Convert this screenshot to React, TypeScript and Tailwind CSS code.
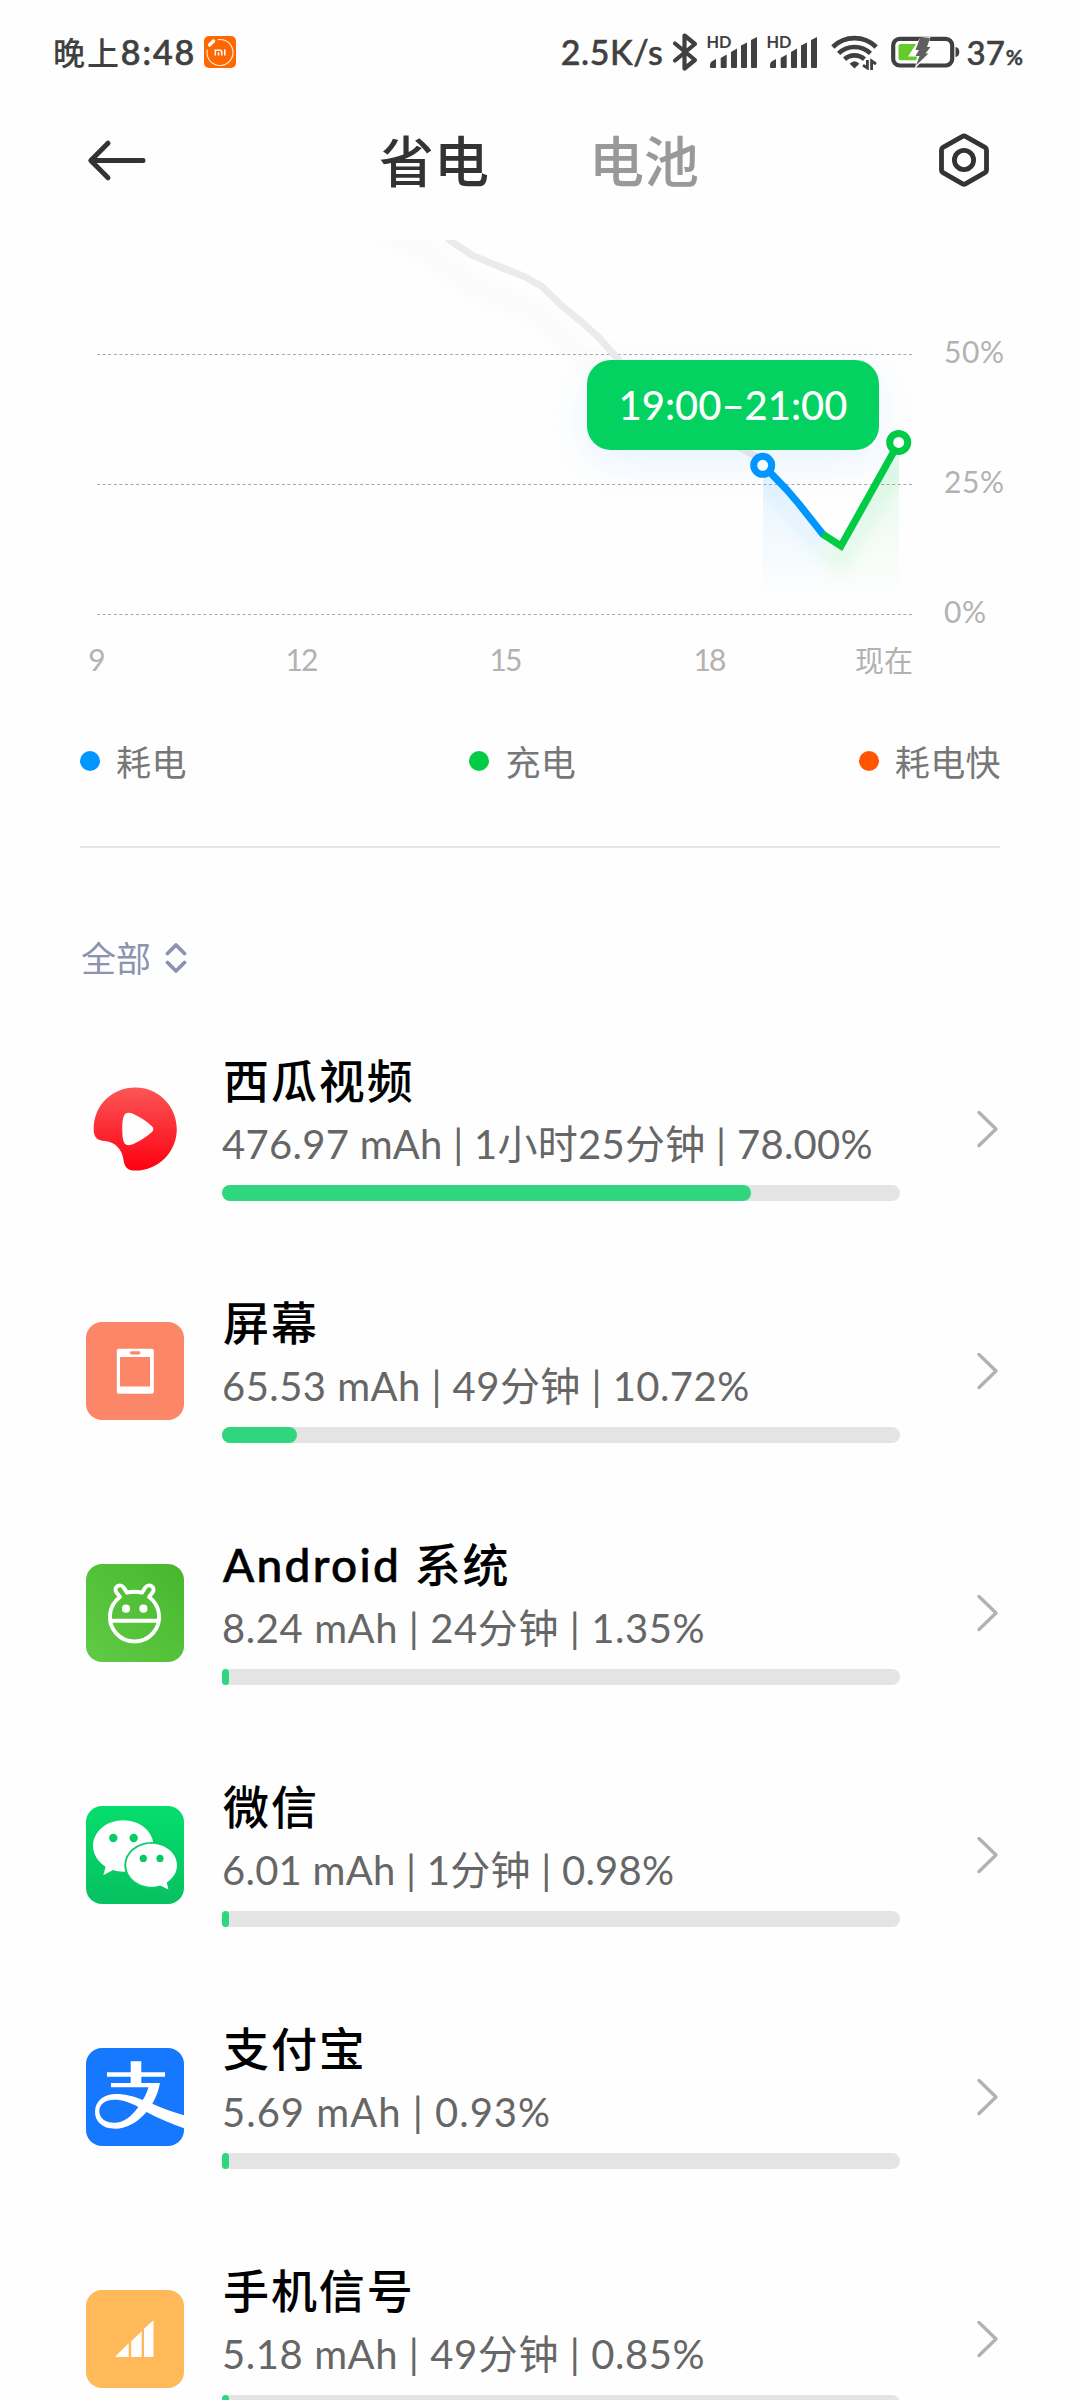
import type { ReactNode } from "react";

type Usage = {
	name: string;
	detail: string;
	detailClass: string;
	bar: number;
	icon: ReactNode;
};

function XiguaIcon() {
	return (
		<svg viewBox="0 0 98 98" className="size-[98px]">
			<defs>
				<linearGradient id="xigua" x1="0" y1="0" x2="0" y2="1">
					<stop offset="0" stopColor="#fb5757" />
					<stop offset="1" stopColor="#fd0010" />
				</linearGradient>
			</defs>
			<path
				fill="url(#xigua)"
				fillRule="evenodd"
				d="M7.7 50C7.2 25.5 26 7.4 49.3 7.4C72.5 7.4 90.8 26 90.8 49C90.8 72 72.5 90.6 49.3 90.6C42 90.6 38.6 87.5 37.6 80.5C36.6 70 29.5 62 19 61C11 60.5 7.9 57 7.7 50ZM36.3 49C36.3 57 37.2 62.5 39.5 64.2C41.5 65.8 44.5 65.3 47.5 64C55 60.5 60.5 57 65.6 52.3C68 50 68 48.2 65.6 46C60.5 41.2 55 37.5 47.5 34C44.5 32.7 41.5 32.2 39.5 33.8C37.2 35.5 36.3 41 36.3 49Z"
			/>
		</svg>
	);
}

function ScreenIcon() {
	return (
		<svg viewBox="0 0 98 98" className="size-[98px] rounded-2xl bg-[#fb8668]">
			<rect x="30.8" y="26.8" width="37" height="45" rx="2" fill="#fff" />
			<rect x="34" y="35" width="30" height="29.5" fill="#fb8668" />
			<rect x="44" y="29.3" width="10.3" height="3.2" rx="1.4" fill="#fb8668" />
		</svg>
	);
}

function AndroidIcon() {
	return (
		<svg viewBox="0 0 98 98" className="size-[98px] rounded-2xl bg-linear-to-tr from-[#60cb44] to-[#47b72e]">
			<g fill="none" stroke="#fff" strokeWidth="3.9" strokeLinejoin="round">
				<path d="M34 33L30.3 28.3C27 23 34.3 18.8 37.8 23.6L41 28.6Q48.5 26.8 56 28.6L59.2 23.6C62.7 18.8 70 23 66.7 28.3L63 33A24.6 24.6 0 1 1 34 33Z" />
				<path d="M24.5 56.8H72.5" />
			</g>
			<circle cx="40" cy="44.7" r="4.1" fill="#fff" />
			<circle cx="57.4" cy="44.7" r="4.1" fill="#fff" />
		</svg>
	);
}

function WechatIcon() {
	return (
		<svg viewBox="0 0 98 98" className="size-[98px] rounded-2xl bg-linear-to-b from-[#04de6c] to-[#07c160]">
			<path fill="#fff" d="M37.3 14.3C54 14.3 67.6 25.7 67.6 40C67.6 54.3 54 65.7 37.3 65.7C34 65.7 30.3 65.1 27 64.1L17.3 69.2L19.6 60.7C12 55.8 7 48.2 7 40C7 25.7 20.6 14.3 37.3 14.3Z" />
			<g fill="#07cd65">
				<circle cx="27.3" cy="32" r="4.2" />
				<circle cx="47.7" cy="32" r="4.2" />
				<ellipse cx="65.6" cy="59.3" rx="27.3" ry="23.4" />
			</g>
			<path fill="#fff" d="M65.6 37.8C51.6 37.8 40.3 47.4 40.3 59.3C40.3 71.2 51.6 80.8 65.6 80.8C68.6 80.8 71.5 80.4 74.2 79.5L82.4 83.4L80.8 76.5C87 72.5 91 66.3 91 59.3C91 47.4 79.6 37.8 65.6 37.8Z" />
			<g fill="#07c863">
				<circle cx="57.3" cy="52.4" r="3.6" />
				<circle cx="74" cy="52.4" r="3.6" />
			</g>
		</svg>
	);
}

function AlipayIcon() {
	return (
		<svg viewBox="0 0 98 98" className="size-[98px] rounded-2xl bg-[#1677ff]">
			<path fill="#fff" d="M44.7 13.3H55.3V24.3H79V28.7H55.3V35H74C72.8 42 70 49.5 66.3 55.7C76 60 87 64 98 67.3V80.3C84 75.5 72 70 60.5 64C52 74 41 80.7 29 80.7C16 80.7 9 73.5 9 63.8C9 53 18 46 30 46C40 46 48 48.5 56.7 52C59.3 48.3 61.3 43.5 62.5 39.3H25V35H44.7V28.7H21V24.3H44.7Z" />
			<path fill="#1677ff" d="M52.3 58.9C44 54.5 36.5 51.8 28.5 51.8C19.5 51.8 13.3 56.3 13.3 63C13.3 70.3 19.5 74.8 28.3 74.8C37.5 74.8 45.5 68.3 52.3 58.9Z" />
		</svg>
	);
}

function SignalIcon() {
	return (
		<svg viewBox="0 0 98 98" className="size-[98px] rounded-2xl bg-[#ffb958]">
			<path fill="#fff" d="M30 65.8L42.7 53.3V67H30ZM45.2 51.3L55.7 41.2V67H45.2ZM58 38.8L67.5 30.2V67H58Z" />
		</svg>
	);
}

const usages: Usage[] = [
	{ name: "西瓜视频", detail: "476.97 mAh | 1小时25分钟 | 78.00%", detailClass: "tracking-[0.28px]", bar: 529, icon: <XiguaIcon /> },
	{ name: "屏幕", detail: "65.53 mAh | 49分钟 | 10.72%", detailClass: "tracking-[0.45px]", bar: 75, icon: <ScreenIcon /> },
	{ name: "Android 系统", detail: "8.24 mAh | 24分钟 | 1.35%", detailClass: "tracking-[0.57px]", bar: 7, icon: <AndroidIcon /> },
	{ name: "微信", detail: "6.01 mAh | 1分钟 | 0.98%", detailClass: "tracking-[0.25px]", bar: 7, icon: <WechatIcon /> },
	{ name: "支付宝", detail: "5.69 mAh | 0.93%", detailClass: "tracking-[1px]", bar: 7, icon: <AlipayIcon /> },
	{ name: "手机信号", detail: "5.18 mAh | 49分钟 | 0.85%", detailClass: "tracking-[0.57px]", bar: 7, icon: <SignalIcon /> },
];

function CellSignal() {
	return (
		<svg viewBox="0 0 52 36" className="h-9 w-[52px] overflow-visible" fill="#404040">
			<text x="-0.5" y="14" fontSize="17" fontWeight="700" textLength="25" lengthAdjust="spacingAndGlyphs">HD</text>
			<path d="M3 31.5Q3 28 5.5 27L9 25V33Q9 34 8 34H4Q3 34 3 33ZM13.7 24L19.7 20.5V33Q19.7 34 18.7 34H14.7Q13.7 34 13.7 33ZM24 18L30 14.5V33Q30 34 29 34H25Q24 34 24 33ZM34 11.5L40 8.5V33Q40 34 39 34H35Q34 34 34 33ZM44 6L50 3V33Q50 34 49 34H45Q44 34 44 33Z" />
		</svg>
	);
}

function StatusBar() {
	return (
		<div className="flex h-[104px] shrink-0 items-center justify-between pr-[57px] pl-[53px] text-[34px] leading-none font-medium text-[#404040]">
			<div className="flex items-center">
				<span className="tracking-[1.9px] [-webkit-text-stroke:0.7px]">
					<span className="text-[32px] [-webkit-text-stroke:0px]">晚上</span>8:48
				</span>
				<svg viewBox="0 0 32 32" className="ml-[8px] size-8">
					<rect width="32" height="32" rx="5" fill="#ff6700" />
					<circle cx="16" cy="16.5" r="13" fill="none" stroke="#ffe8d8" strokeWidth="1.2" strokeDasharray="66 15.7" transform="rotate(-100 16 16.5)" />
					<path d="M5.5 9L9.5 5" stroke="#fff" strokeWidth="3.4" strokeLinecap="round" />
					<path d="M11.3 19.5V14.2H16Q17.8 14.2 17.8 16V19.5M14.6 16.3V19.5M20.8 13.5V19.5" fill="none" stroke="#fff" strokeWidth="1.5" />
				</svg>
			</div>
			<div className="flex items-center">
				<span className="tracking-[0.6px] [-webkit-text-stroke:0.5px]">2.5K/s</span>
				<svg viewBox="0 0 26 40" className="ml-[8px] h-10 w-[26px]" fill="none" stroke="#404040" strokeWidth="4.2" strokeLinejoin="round" strokeLinecap="round">
					<path d="M3 11.5L23 28L12.5 36.5V3.5L23 12L3 28.5" />
				</svg>
				<div className="ml-[9px] flex gap-2">
					<CellSignal />
					<CellSignal />
				</div>
				<svg viewBox="0 0 48 36" className="ml-3 h-9 w-12" fill="none" stroke="#404040" strokeWidth="4.6">
					<path d="M1.8 13A31 31 0 0 1 45.2 13" />
					<path d="M7.6 19.4A23 23 0 0 1 39.4 19.4" />
					<path d="M13.6 25.3A14.5 14.5 0 0 1 33.4 25.3" />
					<path d="M23.5 34.5L18.6 29.8Q23.5 24.5 28.4 29.8Z" fill="#404040" stroke="none" />
					<path d="M32 31.2L36.4 34V26M40.6 36V27L45 30" strokeWidth="2.8" />
				</svg>
				<svg viewBox="0 0 70 32" className="ml-[12px] h-8 w-[70px]">
					<rect x="2.2" y="2.9" width="59" height="26.6" rx="6.5" fill="none" stroke="#404040" strokeWidth="4.2" />
					<path d="M64.5 11Q68.3 11.5 68.3 16Q68.3 20.5 64.5 21Z" fill="#404040" />
					<rect x="7.5" y="8" width="20" height="16.3" rx="2" fill="#64cb2b" />
					<path d="M29 2L39.5 1L36.5 11H39.5L35 18H37L24 33L26 20.5H17Z" fill="#fefefe" />
					<path d="M29 2H39L36 11H39.5L34.5 17.5H37.5L25 29.5L28.5 20H24.5L28 14H24.5Z" fill="#5f5f5f" />
				</svg>
				<span className="ml-[6px] text-[33px] [-webkit-text-stroke:0.5px]">37</span>
				<span className="mt-2 ml-px text-[21px] font-bold [-webkit-text-stroke:0.4px]">%</span>
			</div>
		</div>
	);
}

function Header() {
	return (
		<header className="flex h-[136px] shrink-0 items-start justify-between pt-[28px] pr-[90px] pl-[86px]">
			<svg viewBox="0 0 60 56" className="h-14 w-[60px]" fill="none" stroke="#333" strokeWidth="5" strokeLinecap="round" strokeLinejoin="round">
				<path d="M57 28.5H5M22 11.2L4.8 28.5L22 45.8" />
			</svg>
			<nav className="-ml-[6px] flex gap-[100px] text-[55px] leading-[59px] font-medium">
				<span className="text-[#333]">省电</span>
				<span className="text-[#999]">电池</span>
			</nav>
			<svg viewBox="0 0 52 56" className="h-14 w-[52px]" fill="none" stroke="#333" strokeWidth="4.8" strokeLinejoin="round">
				<path d="M24.6 4.3Q26 3.4 27.4 4.3L47 15.4Q48.5 16.3 48.5 18V38.2Q48.5 39.9 47 40.7L27.4 51.8Q26 52.6 24.6 51.8L5 40.7Q3.5 39.9 3.5 38.2V18Q3.5 16.3 5 15.4Z" />
				<circle cx="26" cy="28" r="9.6" />
			</svg>
		</header>
	);
}

function Chart() {
	return (
		<section className="relative h-[446px] shrink-0 overflow-hidden">
			<svg viewBox="0 240 1080 446" className="h-[446px] w-full">
				<defs>
					<linearGradient id="drain" x1="0" y1="465" x2="0" y2="604" gradientUnits="userSpaceOnUse">
						<stop offset="0" stopColor="#0096ff" stopOpacity="0.09" />
						<stop offset="1" stopColor="#0096ff" stopOpacity="0" />
					</linearGradient>
					<linearGradient id="charge" x1="0" y1="443" x2="0" y2="604" gradientUnits="userSpaceOnUse">
						<stop offset="0" stopColor="#00cc44" stopOpacity="0.1" />
						<stop offset="1" stopColor="#00cc44" stopOpacity="0" />
					</linearGradient>
					<filter id="soft" x="-20%" y="-20%" width="140%" height="150%">
						<feGaussianBlur stdDeviation="8" />
					</filter>
					<clipPath id="area">
						<path d="M763 465L787 490L823 534L841 547L899 443V614H763Z" />
					</clipPath>
				</defs>
				<path d="M97 354.5H914M97 484.5H914M97 614.5H914" stroke="#a8a8a8" strokeWidth="1" strokeDasharray="3 2.6" />
				<path d="M380 232L420 246L470 285L523 306L545 320L580 354L620 388" fill="none" stroke="#000" strokeOpacity="0.015" strokeWidth="18" filter="url(#soft)" />
				<path d="M444 233L449.5 240L471.6 255L497.7 266L523 276L541.4 286L562 306L580.4 321L598.8 337.3L624 366L700 430L738 447L763 460" fill="none" stroke="#ebebeb" strokeWidth="7" strokeLinejoin="round" />
				<path d="M763 465L787 490L823 534V614H763Z" fill="url(#drain)" />
				<path d="M823 534L841 547L899 443V614H823Z" fill="url(#charge)" />
				<g clipPath="url(#area)" fill="none" strokeWidth="14">
					<path d="M763 480L790 510L823 550" stroke="#0096ff" strokeOpacity="0.07" filter="url(#soft)" />
					<path d="M823 550L841 562L899 462" stroke="#00cc44" strokeOpacity="0.09" filter="url(#soft)" />
				</g>
				<g fill="none" strokeWidth="7.2" strokeLinejoin="round">
					<path d="M763 465L787 490L798.5 503.5L823.5 535" stroke="#0096ff" />
					<path d="M822.5 534L841 546L898.6 443" stroke="#00cc44" strokeLinejoin="miter" />
				</g>
				<circle cx="762.7" cy="465.3" r="9" fill="#fff" stroke="#0096ff" strokeWidth="7" />
				<circle cx="898.7" cy="442.4" r="9" fill="#fff" stroke="#00cc44" strokeWidth="7" />
				<g fill="#b2b2b2" fontSize="30">
					<text x="944" y="362.8" textLength="60">50%</text>
					<text x="944" y="492.8" textLength="60">25%</text>
					<text x="944" y="622.8" textLength="42">0%</text>
					<g textAnchor="middle">
						<text x="97" y="671">9</text>
						<text x="302" y="671" textLength="33">12</text>
						<text x="506" y="671" textLength="33">15</text>
						<text x="710" y="671" textLength="33">18</text>
						<text x="884" y="671.5" fontSize="29">现在</text>
					</g>
				</g>
			</svg>
			<div className="absolute top-[120px] left-[587px] flex h-[90px] w-[292px] items-center justify-center rounded-3xl bg-[#03d160] text-[40px] font-medium text-white shadow-[0_14px_40px_rgba(0,140,255,0.09)]">
				19:00–21:00
			</div>
		</section>
	);
}

function Legend() {
	const items = [
		{ label: "耗电", color: "bg-[#0096ff]" },
		{ label: "充电", color: "bg-[#00cc44]" },
		{ label: "耗电快", color: "bg-[#ff5500]" },
	];

	return (
		<div className="mx-20 flex h-[162px] shrink-0 justify-between border-b-2 border-[#e4e4e4] pt-[50px] text-[35px] leading-[50px] text-[#777]">
			{items.map((item) => (
				<div key={item.label} className="flex h-[50px] items-center gap-[17px] tracking-[0.4px]">
					<span className={`size-5 rounded-full ${item.color}`} />
					<span className="-mr-px -ml-px pt-[2px]">{item.label}</span>
				</div>
			))}
		</div>
	);
}

function UsageRow({ name, detail, detailClass, bar, icon }: Usage) {
	return (
		<li className="flex h-[242px] shrink-0 items-center pr-[80px] pl-[86px]">
			{icon}
			<div className="ml-[38px] w-[678px] self-start pt-[41px]">
				<h2 className="h-[64px] pl-px text-[46px] leading-[64px] font-medium tracking-[1.9px] whitespace-nowrap text-black">
					{name.split(" ").map((word, i) => (
						<span key={word} className={/^[A-Z]/.test(word) ? "tracking-[2.3px] [-webkit-text-stroke:0.6px]" : ""}>
							{i > 0 && " "}
							{word}
						</span>
					))}
				</h2>
				<p className={`h-[62px] text-[40px] leading-[62px] whitespace-nowrap text-[#666] ${detailClass}`}>{detail}</p>
				<div className="mt-[10px] h-4 rounded-full bg-[#e4e4e4]">
					<div className="h-full rounded-full bg-[#2fd67d]" style={{ width: bar }} />
				</div>
			</div>
			<svg viewBox="0 0 24 40" className="ml-auto h-10 w-6" fill="none" stroke="#b2b2b2" strokeWidth="3.4" strokeLinecap="round" strokeLinejoin="round">
				<path d="M3 3.5L20 20L3 36.5" />
			</svg>
		</li>
	);
}

export default function App() {
	return (
		<main className="flex h-[2400px] w-[1080px] flex-col overflow-hidden bg-[#fefefe] font-['Lato','Noto_Sans_CJK_SC',sans-serif]">
			<StatusBar />
			<Header />
			<Chart />
			<Legend />
			<div className="flex h-[160px] shrink-0 items-end gap-[14px] pl-[81px] text-[35px] leading-[100px] text-[#8c93b0]">
				全部
				<svg viewBox="0 0 22 32" className="mb-[34px] h-8 w-[22px]" fill="none" stroke="#8c93b0" strokeWidth="3.8" strokeLinecap="round" strokeLinejoin="round">
					<path d="M2.5 11.5L11 3L19.5 11.5M2.5 20.5L11 29L19.5 20.5" />
				</svg>
			</div>
			<ul className="flex flex-col">
				{usages.map((usage) => (
					<UsageRow key={usage.name} {...usage} />
				))}
			</ul>
		</main>
	);
}
